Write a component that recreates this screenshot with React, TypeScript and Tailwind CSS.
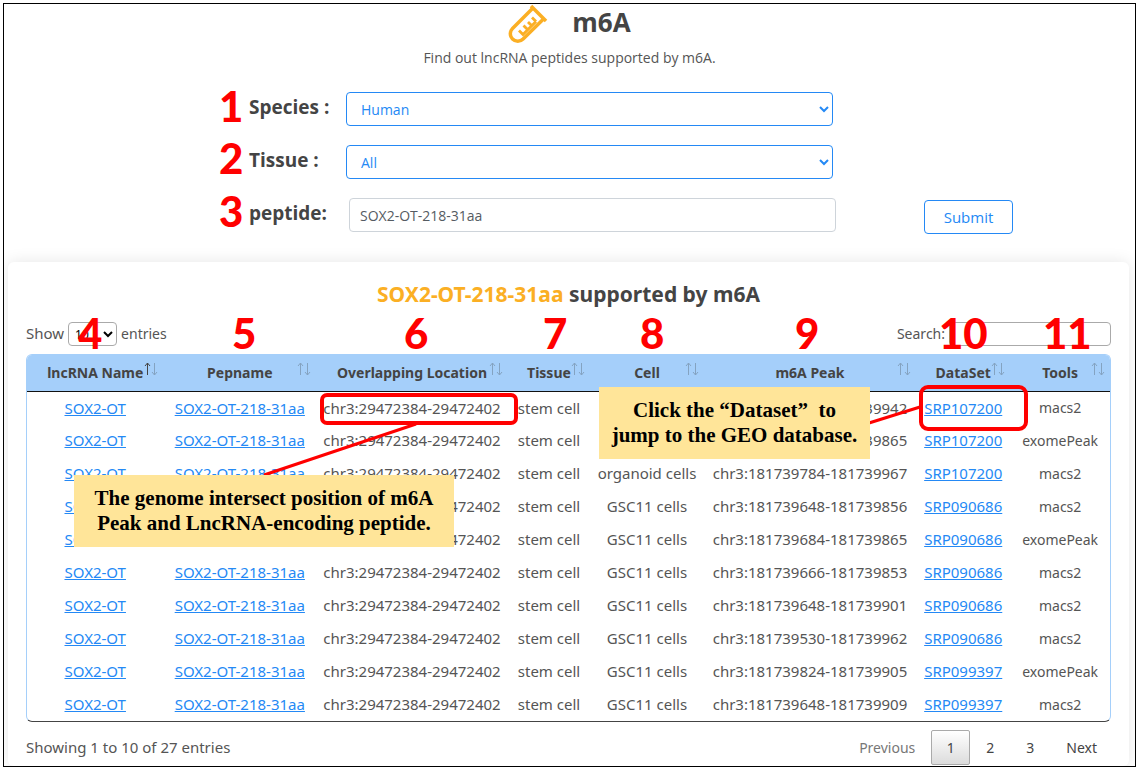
import { FC, ReactNode } from "react";

type Row = { cell: string; peak: string; dataset: string; tool: string };

const rows: Row[] = [
  { cell: "GSC11 cells", peak: "chr3:181739684-181739942", dataset: "SRP107200", tool: "macs2" },
  { cell: "GSC11 cells", peak: "chr3:181739684-181739865", dataset: "SRP107200", tool: "exomePeak" },
  { cell: "organoid cells", peak: "chr3:181739784-181739967", dataset: "SRP107200", tool: "macs2" },
  { cell: "GSC11 cells", peak: "chr3:181739648-181739856", dataset: "SRP090686", tool: "macs2" },
  { cell: "GSC11 cells", peak: "chr3:181739684-181739865", dataset: "SRP090686", tool: "exomePeak" },
  { cell: "GSC11 cells", peak: "chr3:181739666-181739853", dataset: "SRP090686", tool: "macs2" },
  { cell: "GSC11 cells", peak: "chr3:181739648-181739901", dataset: "SRP090686", tool: "macs2" },
  { cell: "GSC11 cells", peak: "chr3:181739530-181739962", dataset: "SRP090686", tool: "macs2" },
  { cell: "GSC11 cells", peak: "chr3:181739824-181739905", dataset: "SRP099397", tool: "exomePeak" },
  { cell: "GSC11 cells", peak: "chr3:181739648-181739909", dataset: "SRP099397", tool: "macs2" },
];

const columns = [
  { label: "lncRNA Name", width: "w-[12.6%]" },
  { label: "Pepname", width: "w-[14.1%]" },
  { label: "Overlapping Location", width: "w-[17.7%]" },
  { label: "Tissue", width: "w-[7.6%]" },
  { label: "Cell", width: "w-[10.5%]" },
  { label: "m6A Peak", width: "w-[19.6%]" },
  { label: "DataSet", width: "w-[8.7%]" },
  { label: "Tools", width: "w-[9.2%]" },
];

const TestTube: FC = () => (
  <svg className="h-10 w-10" viewBox="0 0 40 40" fill="none" stroke="#fbaf24" aria-hidden="true">
    <path d="M23 2 38 17" strokeWidth="3.6" />
    <path d="M25 4 4.500 24.500a7.500 7.500 0 0 0 0 10.600a7.500 7.500 0 0 0 10.600 0L36 14.500" strokeWidth="3.5" />
    <path d="M11 26.500 15 30.500 28 17.500M15.500 21.500l4 4M20 18l3.500 3.500M24 13.500l4 4" strokeWidth="2.8" />
  </svg>
);

const SortArrows: FC<{ active?: boolean }> = ({ active }) => (
  <svg className="absolute top-1.5 right-1 h-4 w-4" viewBox="0 0 16 16" fill="none" stroke="#84a3c1" aria-hidden="true">
    <path d="M4.500 14V2M2 5 4.500 2 7 5" stroke={active ? "#444" : "#84a3c1"} />
    <path d="M11.500 2v12M9 11l2.500 3 2.500-3" />
  </svg>
);

const Mark: FC<{ at: string; children: ReactNode }> = ({ at, children }) => (
  <span className={`absolute ${at} font-['Lato',sans-serif] text-[42px] leading-[42px] font-black text-[#ff0000]`}>
    {children}
  </span>
);

const App: FC = () => {
  return (
    <div className="bg-white p-[3px] font-['Noto_Sans',sans-serif] text-[#444]">
      <div className="relative overflow-hidden border border-black">
        {/* Search form */}
        <header className="text-center font-['Open_Sans',sans-serif]">
          <div className="flex items-start justify-center gap-6">
            <TestTube />
            <h1 className="text-[26px] leading-9 font-bold">m6A</h1>
          </div>
          <p className="mt-1 text-sm leading-5 text-[#555]">Find out lncRNA peptides supported by m6A.</p>
        </header>
        <form className="mt-6 grid grid-cols-[97px_1fr_89px] gap-y-[19px] pr-[122px] pb-7 pl-[245px] font-['Open_Sans',sans-serif]">
          <label htmlFor="species" className="text-[19px] leading-[30px] font-bold">Species :</label>
          <select id="species" className="mr-[91px] h-[34px] rounded border border-[#2489f5] bg-white px-2.5 text-sm text-[#2489f5]">
            <option>Human</option>
          </select>
          <label htmlFor="tissue" className="col-start-1 text-[19px] leading-[30px] font-bold">Tissue :</label>
          <select id="tissue" className="mr-[91px] h-[34px] rounded border border-[#2489f5] bg-white px-2.5 text-sm text-[#2489f5]">
            <option>All</option>
          </select>
          <label htmlFor="peptide" className="col-start-1 text-[19px] leading-[30px] font-bold">peptide:</label>
          <input id="peptide" defaultValue="SOX2-OT-218-31aa" className="mr-[88px] ml-[3px] h-[34px] rounded border border-[#ced4da] px-2.5 text-sm text-[#555b62]" />
          <button type="button" className="mt-0.5 h-[34px] rounded border border-[#2489f5] text-[15px] text-[#2489f5]">Submit</button>
        </form>

        {/* Results */}
        <section className="mr-1.5 ml-1 rounded-md bg-white px-[18px] pt-4 pb-px shadow-[0_0_16px_rgba(0,0,0,0.1)]">
          <h2 className="text-center text-[21px] leading-8 font-bold">
            <span className="text-[#fbaf24]">SOX2-OT-218-31aa</span> supported by m6A
          </h2>
          <div className="mt-3 mb-2 flex items-center justify-between text-sm text-[#555]">
            <div className="flex items-center gap-1">
              <label htmlFor="length" className="text-[15px]">Show</label>
              <select id="length" className="h-6 w-[49px] rounded-sm border border-[#aaa] bg-white pl-0.5 text-xs text-black">
                <option>10</option>
              </select>
              <span>entries</span>
            </div>
            <div className="flex items-center gap-1">
              <label htmlFor="search">Search:</label>
              <input id="search" className="h-6 w-[162px] rounded-sm border border-[#aaa]" />
            </div>
          </div>
          <div className="overflow-hidden rounded-md border border-[#a5cffa] border-b-[#444]">
            <table className="w-full table-fixed text-center text-[15px] whitespace-nowrap text-[#555]">
              <thead className="bg-[#a5cffa] text-sm text-[#444]">
                <tr className="h-9 border-b border-[#111]">
                  {columns.map((c, i) => (
                    <th key={c.label} className={`relative ${c.width}`}>
                      {c.label}
                      <SortArrows active={i === 0} />
                    </th>
                  ))}
                </tr>
              </thead>
              <tbody>
                {rows.map((r, i) => (
                  <tr key={i} className="h-[33px]">
                    <td><a href="#" className="text-[#2489f5] underline">SOX2-OT</a></td>
                    <td><a href="#" className="text-[#2489f5] underline">SOX2-OT-218-31aa</a></td>
                    <td>chr3:29472384-29472402</td>
                    <td>stem cell</td>
                    <td>{r.cell}</td>
                    <td>{r.peak}</td>
                    <td><a href="#" className="text-[#2489f5] underline">{r.dataset}</a></td>
                    <td className="text-sm">{r.tool}</td>
                  </tr>
                ))}
              </tbody>
            </table>
          </div>
          <div className="flex items-center justify-between pt-2 text-[15px] text-[#555]">
            <p>Showing 1 to 10 of 27 entries</p>
            <nav className="flex items-center text-sm text-[#444]">
              <button type="button" className="px-4 text-[#777]">Previous</button>
              <button type="button" className="h-[35px] w-[39px] rounded-xs border border-[#aaa] bg-linear-to-b from-white to-[#dcdcdc]">1</button>
              <button type="button" className="w-10">2</button>
              <button type="button" className="w-10">3</button>
              <button type="button" className="pr-3.5 pl-4">Next</button>
            </nav>
          </div>
        </section>

        {/* Numbered marks and callouts */}
        <Mark at="left-[215px] top-[81px]">1</Mark>
        <Mark at="left-[215px] top-[133px]">2</Mark>
        <Mark at="left-[215px] top-[186px]">3</Mark>
        <Mark at="left-[74px] top-[308px]">4</Mark>
        <Mark at="left-[228px] top-[308px]">5</Mark>
        <Mark at="left-[400px] top-[308px]">6</Mark>
        <Mark at="left-[539px] top-[308px]">7</Mark>
        <Mark at="left-[636px] top-[308px]">8</Mark>
        <Mark at="left-[791px] top-[308px]">9</Mark>
        <Mark at="left-[935px] top-[308px]">10</Mark>
        <Mark at="left-[1039px] top-[308px]">11</Mark>
        <svg className="pointer-events-none absolute top-0 left-0 h-full w-full" fill="none" stroke="#ff0000" aria-hidden="true">
          <path d="M412 420 260 471M865 419l51-16" strokeWidth="3" />
          <rect x="318" y="391" width="194" height="28" rx="5" strokeWidth="4" />
          <rect x="917" y="383" width="105" height="42" rx="7" strokeWidth="4" />
        </svg>
        <p className="absolute top-[471px] left-[70px] w-[380px] bg-[#ffe599] py-[11px] text-center font-['Liberation_Serif',serif] text-[21px] leading-[25px] font-bold text-black">
          The genome intersect position of m6A<br />Peak and LncRNA-encoding peptide.
        </p>
        <p className="absolute top-[383px] left-[595px] w-[271px] bg-[#ffe599] py-[11px] text-center font-['Liberation_Serif',serif] text-[21px] leading-[25px] font-bold text-black">
          Click the “Dataset”&nbsp; to<br />jump to the GEO database.
        </p>
      </div>
    </div>
  );
};
export default App;
